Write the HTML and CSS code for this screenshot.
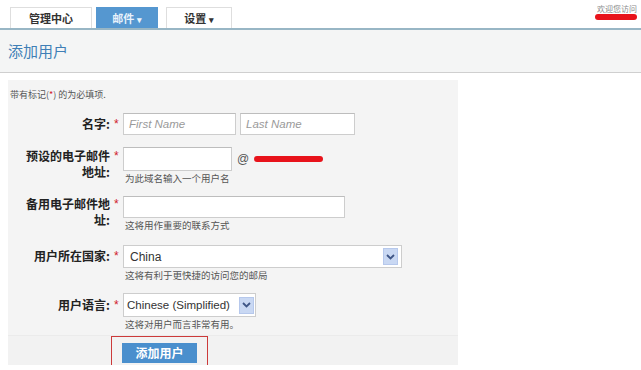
FILE: index.html
```html
<!DOCTYPE html>
<html lang="zh">
<head>
<meta charset="utf-8">
<title>添加用户</title>
<link rel="stylesheet" href="styles.css">
</head>
<body>
<div class="topbar">
  <div class="tabs">
    <div class="tab tab-home">管理中心</div>
    <div class="tab tab-active">邮件 <span class="caret">▾</span></div>
    <div class="tab tab-settings">设置 <span class="caret">▾</span></div>
  </div>
  <div class="user">
    <div class="user-text">欢迎您访问</div>
    <div class="redact redact-user"></div>
  </div>
</div>
<div class="header"><h1 class="title">添加用户</h1></div>

<div class="panel">
  <div class="note">带有标记(<span class="req">*</span>) 的为必填项.</div>
  <div class="rows">
    <div class="row">
      <div class="label pad3">名字:</div>
      <div class="star pad3">*</div>
      <div class="field">
        <div class="pair">
          <div class="input w113 ph">First Name</div>
          <div class="input w115 ph">Last Name</div>
        </div>
      </div>
    </div>
    <div class="row">
      <div class="label pad1">预设的电子邮件<br>地址:</div>
      <div class="star pad1">*</div>
      <div class="field">
        <div class="pair center">
          <div class="input w109 h24"></div>
          <span class="at">@</span>
          <div class="redact redact-domain"></div>
        </div>
        <div class="hint">为此域名输入一个用户名</div>
      </div>
    </div>
    <div class="row row-gap">
      <div class="label">备用电子邮件地<br>址:</div>
      <div class="star">*</div>
      <div class="field">
        <div class="input w222"></div>
        <div class="hint">这将用作重要的联系方式</div>
      </div>
    </div>
    <div class="row">
      <div class="label pad3">用户所在国家:</div>
      <div class="star pad3">*</div>
      <div class="field">
        <div class="select w279 h23">
          <span class="select-text">China</span>
          <span class="arrow"><svg width="9" height="6" viewBox="0 0 9 6"><path d="M1 1 L4.5 4.5 L8 1" fill="none" stroke="#3f5687" stroke-width="1.8"/></svg></span>
        </div>
        <div class="hint">这将有利于更快捷的访问您的邮局</div>
      </div>
    </div>
    <div class="row">
      <div class="label pad4">用户语言:</div>
      <div class="star pad4">*</div>
      <div class="field">
        <div class="select select-sm w133 h24">
          <span class="select-text">Chinese (Simplified)</span>
          <span class="arrow"><svg width="9" height="6" viewBox="0 0 9 6"><path d="M1 1 L4.5 4.5 L8 1" fill="none" stroke="#3f5687" stroke-width="1.8"/></svg></span>
        </div>
        <div class="hint">这将对用户而言非常有用。</div>
      </div>
    </div>
  </div>
  <div class="actions">
    <div class="highlight">
      <button class="btn" type="button">添加用户</button>
    </div>
  </div>
</div>
</body>
</html>
```

FILE: styles.css
```css
* { box-sizing: border-box; }

body {
  margin: 0;
  background: #ffffff;
  font-family: "Liberation Sans", "Noto Sans CJK SC", sans-serif;
  color: #222;
}

.topbar {
  display: flex;
  align-items: flex-end;
  height: 30px;
  padding-left: 10px;
  border-bottom: 2px solid #98b6c5;
}

.tabs {
  display: flex;
  align-items: flex-end;
}

.tab {
  height: 21px;
  line-height: 20px;
  text-align: center;
  font-family: "Noto Sans CJK SC", sans-serif;
  font-size: 11px;
  font-weight: bold;
  color: #333;
  background: #fff;
  border: 1px solid #dedede;
  border-bottom: none;
}

.tab-home { width: 82px; }
.tab-active {
  width: 62px;
  margin-left: 4px;
  background: #5597d0;
  border-color: #5597d0;
  color: #e8f2fb;
}
.tab-settings { width: 66px; margin-left: 8px; }

.caret { font-size: 9px; }

.user {
  margin-left: auto;
  align-self: flex-start;
  margin-top: 4px;
  padding-right: 4px;
  display: flex;
  flex-direction: column;
  align-items: flex-end;
}

.user-text {
  font-family: "Noto Sans CJK SC", sans-serif;
  font-size: 8px;
  line-height: 9px;
  color: #8a8a8a;
}

.redact {
  background: #e8131b;
  border-radius: 3px;
}

.redact-user {
  width: 42px;
  height: 6px;
  margin-top: 1px;
}

.header {
  height: 43px;
  background: #f4f5f5;
  border-bottom: 1px solid #cfcfcf;
}

.title {
  margin: 0;
  padding-left: 8px;
  font-family: "Noto Sans CJK SC", sans-serif;
  font-weight: normal;
  font-size: 15px;
  line-height: 42px;
  color: #3f7fb6;
}

.panel {
  width: 450px;
  height: 285px;
  margin: 7px 0 0 8px;
  padding-top: 9px;
  background: #f4f4f4;
}

.note {
  padding-left: 2px;
  font-family: "Noto Sans CJK SC", sans-serif;
  font-size: 9px;
  line-height: 12px;
  color: #555;
}

.req { color: #d0202a; }

.rows {
  display: flex;
  flex-direction: column;
  gap: 12px;
  margin-top: 12px;
}

.row {
  display: flex;
  align-items: flex-start;
}

.row-gap { margin-bottom: 2px; }

.label {
  width: 102px;
  text-align: right;
  font-family: "Noto Sans CJK SC", sans-serif;
  font-size: 12px;
  font-weight: bold;
  line-height: 16px;
  color: #222;
}

.star {
  width: 13px;
  padding-left: 4px;
  font-size: 12px;
  line-height: 16px;
  color: #d0202a;
}

.pad1 { padding-top: 1px; }
.pad3 { padding-top: 3px; }
.pad4 { padding-top: 4px; }

.field {
  display: flex;
  flex-direction: column;
}

.pair {
  display: flex;
  gap: 4px;
}

.pair.center { align-items: center; }

.input {
  height: 22px;
  background: #fff;
  border: 1px solid #cdcdcd;
  border-top-color: #bdbdbd;
}

.ph {
  padding-left: 5px;
  font-size: 11.5px;
  font-style: italic;
  line-height: 20px;
  color: #9a9a9a;
}

.w109 { width: 109px; }
.w113 { width: 113px; }
.w115 { width: 115px; }
.w133 { width: 133px; }
.w222 { width: 222px; }
.w279 { width: 279px; }
.h23 { height: 23px; }
.h24 { height: 24px; }

.at {
  margin-left: 1px;
  font-size: 12px;
  color: #555;
}

.redact-domain {
  width: 69px;
  height: 6px;
  margin-left: 1px;
}

.select {
  display: flex;
  align-items: center;
  justify-content: space-between;
  background: #fff;
  border: 1px solid #cdcdcd;
  padding: 0 3px 0 6px;
}

.select-sm {
  padding: 0 1px 0 3px;
}

.select-text {
  font-size: 12px;
  color: #333;
  white-space: nowrap;
}

.select-sm .select-text {
  font-size: 11.5px;
}

.arrow {
  flex: none;
  width: 15px;
  height: 17px;
  display: flex;
  align-items: center;
  justify-content: center;
  background: #c9d8f3;
  border: 1px solid #b6c8ec;
}

.hint {
  margin-top: 1px;
  padding-left: 2px;
  font-family: "Noto Sans CJK SC", sans-serif;
  font-size: 9.5px;
  line-height: 12px;
  color: #555;
}

.actions {
  margin-top: 5px;
  height: 30px;
  border-top: 1px solid #ebebeb;
  background: #f2f2f2;
}

.highlight {
  width: 97px;
  height: 33px;
  margin: 0 0 0 103px;
  padding: 6px 0 0 10px;
  border: 1px solid #cc3a3a;
}

.btn {
  display: block;
  width: 75px;
  height: 20px;
  padding: 0;
  border: none;
  background: #4a8fcd;
  color: #fff;
  font-family: "Noto Sans CJK SC", sans-serif;
  font-size: 12px;
  font-weight: bold;
  line-height: 20px;
}
```
